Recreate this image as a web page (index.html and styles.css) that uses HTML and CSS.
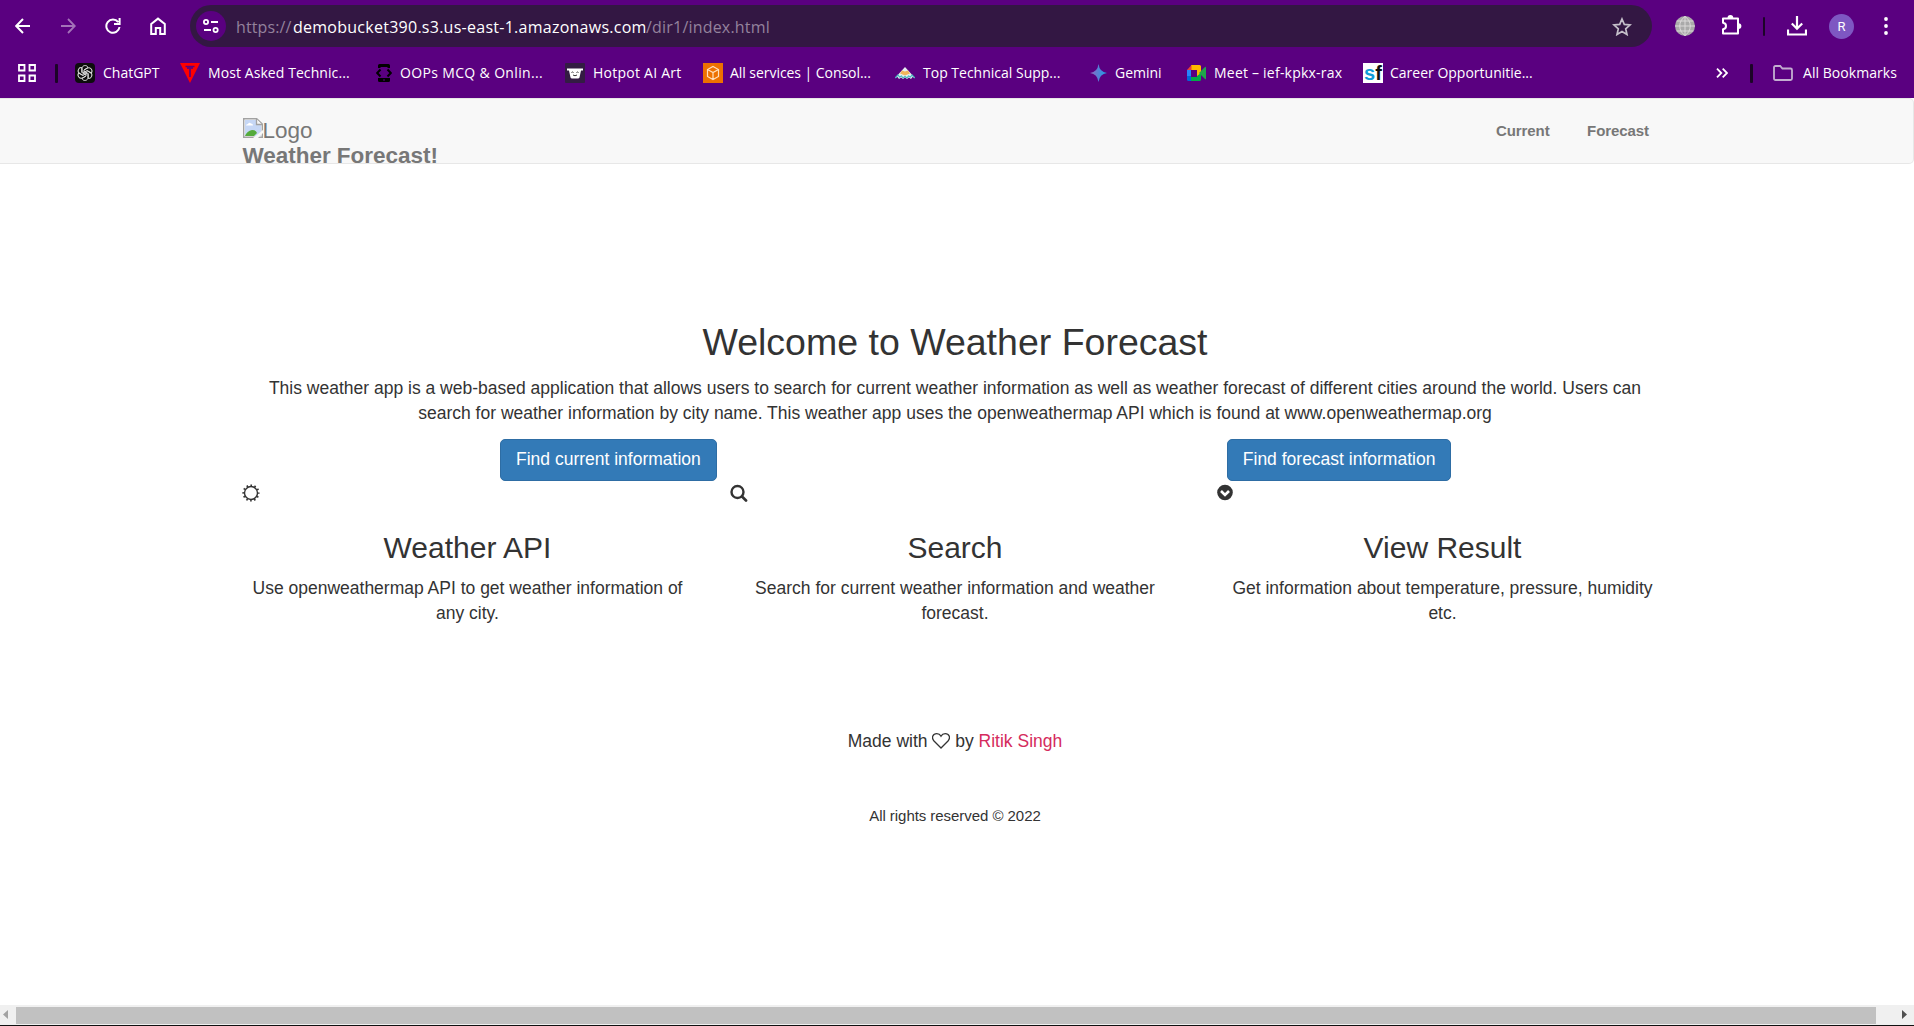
FILE: index.html
```html
<!DOCTYPE html>
<html lang="en">
<head>
<meta charset="utf-8">
<title>Weather Forecast</title>
<link rel="stylesheet" href="styles.css">
</head>
<body>
<header class="browser">
  <div class="toolbar">
    <div class="nav-icons">
      <svg width="16" height="16" viewBox="0 0 16 16"><path d="M15 8H1.5M8 1 1.2 8 8 15" fill="none" stroke="#fff" stroke-width="2"/></svg>
      <svg class="dim" width="16" height="16" viewBox="0 0 16 16"><path d="M1 8h13.5M8 1l6.8 7L8 15" fill="none" stroke="#fff" stroke-width="1.8"/></svg>
      <svg width="16" height="16" viewBox="0 0 16 16"><path d="M13.2 4.2A6.6 6.6 0 1 0 14.5 9M14.6 0v6H9" fill="none" stroke="#fff" stroke-width="2"/></svg>
      <svg width="16" height="18" viewBox="0 0 16 18"><path d="M1.2 7 8 1.6 14.8 7v10h-4.6v-6H5.8v6H1.2z" fill="none" stroke="#fff" stroke-width="2"/></svg>
    </div>
    <div class="omnibox">
      <span class="site-info"><svg width="16" height="16" viewBox="0 0 16 16" fill="none" stroke="#fff" stroke-width="1.8"><circle cx="3" cy="4" r="2.1"/><path d="M8 4h7M1 12h7"/><circle cx="12.6" cy="12" r="2.1"/></svg></span>
      <span class="url"><span class="scheme">https://</span><span class="host">demobucket390.s3.us-east-1.amazonaws.com</span><span class="path">/dir1/index.html</span></span>
      <svg class="star" width="20" height="19" viewBox="0 0 20 19"><path d="m10 2 2.3 5.4 5.8.5-4.4 3.9 1.3 5.7-5-3-5 3 1.300-5.700L1.900 7.900l5.800-.5z" fill="none" stroke="#c5bfca" stroke-width="1.7"/></svg>
    </div>
    <div class="actions">
      <svg class="globe" width="20" height="20" viewBox="0 0 20 20"><circle cx="10" cy="10" r="10" fill="#aaa"/><path d="M10 0v20M0 10h20M1.500 5h17M1.500 15h17M10 .5C3 5 3 15 10 19.500M10 .5c7 4.500 7 14.500 0 19" fill="none" stroke="#e0dede" stroke-width=".9"/></svg>
      <svg class="puzzle" width="21" height="20" viewBox="0 0 21 20"><path d="M2 3.500h15v15H2v-4.300c4-.5 4-6 0-6.500z" fill="none" stroke="#fff" stroke-width="2" stroke-linejoin="round"/><path d="M6.500 3a2.900 2.900 0 0 1 5.800 0zM17.500 8.200a2.900 2.900 0 0 1 0 5.800z" fill="#fff"/></svg>
      <span class="divider thin"></span>
      <svg class="download" width="20" height="20" viewBox="0 0 20 20"><path d="M10 0v12M4.800 7.500 10 12.700l5.200-5.200M1 13.500v5h18v-5" fill="none" stroke="#fff" stroke-width="2.200"/></svg>
      <span class="avatar">R</span>
      <svg class="menu" width="4" height="18" viewBox="0 0 4 18" fill="#fff"><circle cx="2" cy="2" r="1.900"/><circle cx="2" cy="9" r="1.900"/><circle cx="2" cy="16" r="1.900"/></svg>
    </div>
  </div>
  <div class="bookmarks">
    <svg class="apps" width="18" height="18" viewBox="0 0 18 18" fill="none" stroke="#fff" stroke-width="1.800"><path d="M1 1h5.500v5.500H1zM11.500 1H17v5.500h-5.500zM1 11.500h5.500V17H1zM11.500 11.500H17V17h-5.500z"/></svg>
    <span class="divider"></span>
    <div class="bookmark b-chat"><svg width="20" height="20" viewBox="0 0 20 20"><rect width="20" height="20" rx="4" fill="#0d0d0d"/><g fill="none" stroke="#ddd" stroke-width="1"><path id="petal" d="M7 9V5.500C7 2 12 1.500 13 4.500L9 7v4.500"/><use href="#petal" transform="rotate(60 10 10)"/><use href="#petal" transform="rotate(120 10 10)"/><use href="#petal" transform="rotate(180 10 10)"/><use href="#petal" transform="rotate(240 10 10)"/><use href="#petal" transform="rotate(300 10 10)"/></g></svg><span>ChatGPT</span></div>
    <div class="bookmark b-most"><svg width="20" height="20" viewBox="0 0 20 20"><path d="M0 0h20L10 20z" fill="#f00"/><path d="M5.500 3.500h9M10 3.500V14M8 4v2M12 4v2" stroke="#5a0080" stroke-width="1.700"/></svg><span>Most Asked Technic...</span></div>
    <div class="bookmark b-oops"><svg width="16" height="18" viewBox="0 0 16 18"><path d="M2 4V1.500Q2 0 3.500 0h9Q14 0 14 1.500V4h-2.500V3h-7v1zM2 14v2.500Q2 18 3.500 18h9q1.500 0 1.500-1.500V14z" fill="#000"/><path d="M4.500 5.500 1.200 9l3.300 3.500M11.500 5.500 14.800 9l-3.300 3.500" fill="none" stroke="#000" stroke-width="2"/><path d="M7 16h2" stroke="#5a0080"/></svg><span>OOPs MCQ &amp; Onlin...</span></div>
    <div class="bookmark b-hotpot"><svg width="20" height="20" viewBox="0 0 20 20"><rect width="20" height="20" rx="1" fill="#331c43"/><path d="M2 5.500h16v2h-2l-1.500 7q-.3 1-1.500 1H7q-1.200 0-1.500-1L4 7.500H2z" fill="#fff"/><path d="M6.500 9.500q1-1 2 0M11.500 9.500q1-1 2 0M8 12q2 1.500 4 0" fill="none" stroke="#333"/></svg><span>Hotpot AI Art</span></div>
    <div class="bookmark b-all"><svg width="20" height="20" viewBox="0 0 20 20"><path d="M0 0h20v20H0z" fill="#ed7100"/><path d="m10 3.500 5.500 3v7L10 16.500l-5.500-3v-7zM4.500 6.500 10 9.500l5.500-3M10 9.500v7" fill="none" stroke="#ffdfbd" stroke-width="1.200"/></svg><span>All services | Consol...</span></div>
    <div class="bookmark b-top"><svg width="20" height="12" viewBox="0 0 20 12"><path d="m10 0 10 11-2.500-1-1.500 2-2-1.500-2 1.500-2-1.500L8 12l-2-1.500L4 12l-1.500-2L0 11z" fill="#e6eef0"/><path d="m7 3.500 3 1 3-1 2 3-5 2-5-2z" fill="#f2b45c"/><path d="m0 11 3-3 1.500 2 2-1 1.500 2 2-1.500 2 1.500 1.500-2 2 1 1.500-2 3 3" fill="none" stroke="#49b6c0" stroke-width="1.200"/></svg><span>Top Technical Supp...</span></div>
    <div class="bookmark b-gemini"><svg width="17" height="18" viewBox="0 0 17 18"><defs><linearGradient id="gem"><stop offset="0" stop-color="#9168c0"/><stop offset=".6" stop-color="#4888da"/><stop offset="1" stop-color="#1ba1e3"/></linearGradient></defs><path d="M8.500 0Q9.500 8 17 9q-7.500 1-8.500 9Q7.500 10 0 9q7.500-1 8.500-9z" fill="url(#gem)"/></svg><span>Gemini</span></div>
    <div class="bookmark b-meet"><svg width="19" height="16" viewBox="0 0 19 16"><path d="M0 5h4v6H0z" fill="#2684fc"/><path d="M0 11h4v5H1.500Q0 16 0 14.500z" fill="#0066da"/><path d="M4 12h10v2.500q0 1.500-1.500 1.500H4zM10 8l4-3v8h-4z" fill="#00ac47"/><path d="M4 0h8.500Q14 0 14 1.500V8l-4 3V5H4z" fill="#ffba00"/><path d="M0 5 4.500 0v5z" fill="#ea4335"/><path d="m12 8 6-6q1-.5 1 .7v11q0 1-1 .3z" fill="#20a54a"/></svg><span>Meet – ief-kpkx-rax</span></div>
    <div class="bookmark b-career"><span class="sf"><b>s</b><i>f</i></span><span>Career Opportunitie...</span></div>
    <svg class="more" width="12" height="10" viewBox="0 0 12 10"><path d="m1 .7 4.300 4.300L1 9.300M6.700.7 11 5 6.700 9.300" fill="none" stroke="#fff" stroke-width="1.800"/></svg>
    <span class="divider"></span>
    <div class="bookmark b-folder"><svg width="20" height="16" viewBox="0 0 20 16"><path d="M1 2.500Q1 1 2.500 1h4.700l2.200 2.500h8.100Q19 3.500 19 5v8.500q0 1.500-1.500 1.500h-15Q1 15 1 13.500z" fill="none" stroke="#c3aed0" stroke-width="1.800"/></svg><span>All Bookmarks</span></div>
  </div>
</header>

<nav class="navbar">
  <a class="brand"><span class="logo"><svg width="20" height="20" viewBox="0 0 20 20"><path d="M.700.700h13L19.300 6v13.300H.7z" fill="#fff" stroke="#a2a2a2" stroke-width="1.400"/><path d="M2 2h11v5h5v11H2z" fill="#c6d7f5"/><path d="M3 7.500q0-1.500 2-1.500 1-2 3-.5 2 0 2 2z" fill="#fff"/><path d="M2 18q2-5 7-6 4 0 5 3l-3 3z" fill="#55ab3c"/><path d="M13.500 1v5.500H19" fill="#f7f7f7" stroke="#a2a2a2" stroke-width="1.300"/><path d="m10 20 10-8v3l-5 5z" fill="#f8f8f8"/></svg>Logo</span><strong>Weather Forecast!</strong></a>
  <div class="links"><a>Current</a><a>Forecast</a></div>
</nav>

<main class="container">
  <h2>Welcome to Weather Forecast</h2>
  <p>This weather app is a web-based application that allows users to search for current weather information as well as weather forecast of different cities around the world. Users can<br>search for weather information by city name. This weather app uses the openweathermap API which is found at www.openweathermap.org</p>
  <div class="buttons"><a class="btn">Find current information</a><a class="btn">Find forecast information</a></div>
  <div class="features">
    <section>
      <svg class="glyph" width="18" height="18" viewBox="0 0 18 18"><circle cx="9" cy="9" r="6.500" fill="none" stroke="#333" stroke-width="1.400"/><circle cx="9" cy="9" r="7.700" fill="none" stroke="#333" stroke-width="1.800" stroke-dasharray="1.600 2.432" stroke-dashoffset=".8"/></svg>
      <h3>Weather API</h3>
      <p>Use openweathermap API to get weather information of<br>any city.</p>
    </section>
    <section>
      <svg class="glyph" width="18" height="18" viewBox="0 0 18 18"><circle cx="7.500" cy="8" r="6" fill="none" stroke="#333" stroke-width="2.400"/><path d="m12 12.500 4 4" stroke="#333" stroke-width="2.700" stroke-linecap="round"/></svg>
      <h3>Search</h3>
      <p>Search for current weather information and weather<br>forecast.</p>
    </section>
    <section>
      <svg class="glyph" width="18" height="18" viewBox="0 0 18 18"><circle cx="8" cy="8.500" r="7.800" fill="#333"/><path d="m4 7 4 4 4-4" fill="none" stroke="#fff" stroke-width="2.600"/></svg>
      <h3>View Result</h3>
      <p>Get information about temperature, pressure, humidity<br>etc.</p>
    </section>
  </div>
  <footer>
    <p class="made">Made with <svg class="heart" width="18" height="16" viewBox="0 0 18 16"><path d="M9 15 2 8C-1 4.500 1 .7 4.800.7 7 .7 8.300 2 9 3.200 9.700 2 11 .7 13.200.7 17 .7 19 4.500 16 8z" fill="none" stroke="#333" stroke-width="1.300"/></svg> by <a>Ritik Singh</a></p>
    <p class="copyright">All rights reserved © 2022</p>
  </footer>
</main>

<div class="scrollbar">
  <svg width="16" height="19" viewBox="0 0 16 19"><path d="M8 5v9L3 9.500z" fill="#a3a3a3"/></svg>
  <span class="thumb"></span>
  <svg width="38" height="19" viewBox="0 0 38 19"><path d="M26 5v9l5-4.500z" fill="#505050"/></svg>
</div>
</body>
</html>
```

FILE: styles.css
```css
* { box-sizing: border-box; }
body {
  margin: 0;
  width: 1914px;
  height: 1026px;
  display: flex;
  flex-direction: column;
  overflow: hidden;
  background: #fff;
  color: #333;
  font: 17.5px/25px "Liberation Sans", Arial, sans-serif;
}
svg { display: block; flex: none; }
p, h2, h3 { margin: 0; font-weight: 400; }

/* browser chrome */
.browser {
  height: 98px;
  flex: none;
  background: #5a0080;
  color: #fff;
  font: 14px/20px "Open Sans", "Noto Sans", sans-serif;
}
.toolbar { display: flex; height: 47px; padding-top: 5px; }
.nav-icons { display: flex; align-items: center; gap: 29px; width: 190px; padding-left: 15px; }
.dim { opacity: .45; }
.omnibox {
  display: flex;
  align-items: center;
  width: 1462px;
  height: 42px;
  padding: 0 20px 0 6px;
  border-radius: 21px;
  background: #331743;
}
.site-info {
  display: flex;
  align-items: center;
  justify-content: center;
  width: 30px;
  height: 30px;
  margin-right: 10px;
  border-radius: 50%;
  background: #5a0080;
}
.url { display: flex; padding-top: 1px; font-size: 16px; white-space: nowrap; }
.url span { color: #93829c; }
.url .host { color: #fff; }
.scheme { width: 57px; letter-spacing: .1px; }
.host { width: 353px; letter-spacing: .26px; }
.path { letter-spacing: .2px; }
.star { margin-left: auto; }
.actions { display: flex; align-items: center; padding-left: 23px; }
.puzzle { margin-left: 26px; margin-top: -3px; }
.divider { width: 3px; height: 19px; flex: none; border-radius: 1px; background: #1c0428; }
.divider.thin { width: 2px; margin: 0 22px; margin-left: 21px; }
.avatar {
  display: flex;
  align-items: center;
  justify-content: center;
  width: 25px;
  height: 25px;
  margin: 0 30px 0 22px;
  border-radius: 50%;
  background: #7e57c2;
  font: 13px Roboto, sans-serif;
}
.bookmarks { display: flex; align-items: center; height: 51px; padding: 1px 17px 0 18px; }
.apps { margin-right: 19px; }
.bookmarks .divider { margin-right: 17px; }
.bookmark { display: flex; align-items: center; gap: 8px; white-space: nowrap; flex: none; }
.b-chat { width: 105px; }
.b-most { width: 196px; letter-spacing: .08px; }
.b-oops { width: 189px; letter-spacing: .35px; }
.b-hotpot { width: 138px; letter-spacing: .25px; }
.b-all { width: 192px; gap: 7px; letter-spacing: -.05px; }
.b-top { width: 195px; }
.b-gemini { width: 97px; }
.b-meet { width: 176px; letter-spacing: .22px; }
.b-career { width: 353px; gap: 7px; }
.more { margin-right: 22px; }
.bookmarks .b-folder { gap: 10px; margin-left: 3px; letter-spacing: .05px; }
.sf {
  display: flex;
  justify-content: center;
  width: 20px;
  height: 20px;
  background: #fff;
  font: bold 20px/20px "Liberation Sans", Arial, sans-serif;
}
.sf b { color: #109bd8; }
.sf i { color: #111; font-style: normal; }

/* page */
.navbar {
  display: flex;
  justify-content: space-between;
  height: 66px;
  flex: none;
  padding: 19px 264px 0 242.5px;
  border: 1px solid #e7e7e7;
  border-left: 0;
  border-radius: 0 5px 5px 0;
  background: #f8f8f8;
  color: #777;
}
.brand { font-size: 22.5px; line-height: 25px; letter-spacing: -.03px; }
.brand strong { display: block; }
.logo { display: flex; }
.links { display: flex; gap: 37.5px; font-size: 15px; font-weight: 700; letter-spacing: -.08px; }
.container { width: 1462.5px; height: 841px; flex: none; margin-left: 223.75px; padding-top: 158px; text-align: center; }
h2 { margin-bottom: 13px; font-size: 37.5px; line-height: 41px; }
.container > p { white-space: nowrap; }
.buttons { display: flex; gap: 510px; height: 55px; padding: 13px 0 0 276.25px; }
.btn {
  height: 42px;
  padding: 7px 15px;
  border: 1px solid #2e6da4;
  border-radius: 5px;
  background: #337ab7;
  color: #fff;
  white-space: nowrap;
}
.features { display: grid; grid-template-columns: repeat(3, 1fr); height: 248px; }
.glyph { margin: 3px 0 29px 18.5px; }
h3 { margin-bottom: 12px; font-size: 30px; line-height: 33px; }
.heart { display: inline-block; vertical-align: -2px; }
.made a { color: #d52b5d; }
.copyright { margin-top: 49px; font-size: 15px; letter-spacing: -.05px; }
.scrollbar { display: flex; height: 21px; flex: none; border-bottom: 1px solid #111; background: #f0f0f0; }
.thumb { flex: 1; margin: 2px 0 1px; background: #c1c1c1; }
```
